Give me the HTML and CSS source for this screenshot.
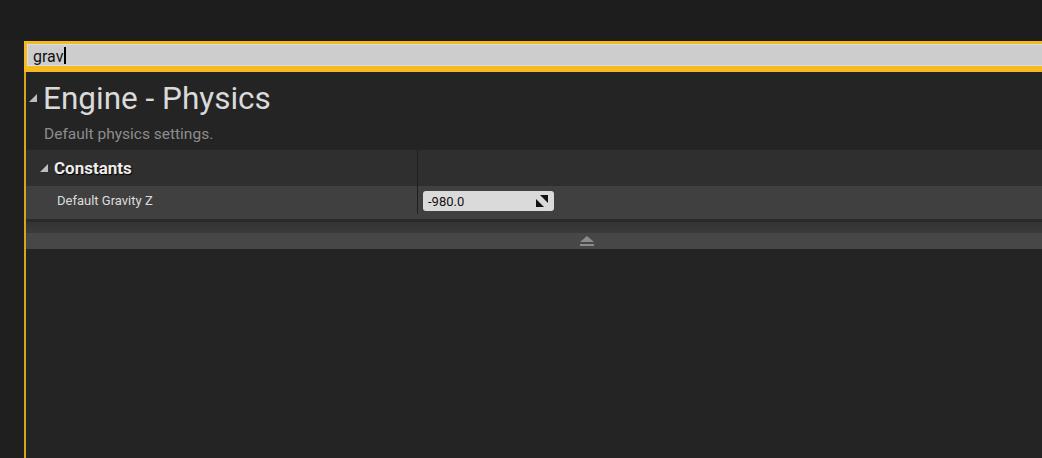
FILE: index.html
```html
<!DOCTYPE html>
<html>
<head>
<meta charset="utf-8">
<link rel="stylesheet" href="styles.css">
</head>
<body>
<div class="top"></div>
<div class="panel">
  <div class="search">
    <div class="input"><span class="typed">grav</span><span class="caret"></span></div>
  </div>
  <div class="body">
    <div class="cat-head">
      <svg class="tri big" width="8" height="8" viewBox="0 0 8 8"><polygon points="0,8 8,0 8,8"/></svg>
      <h1 class="cat-title">Engine - Physics</h1>
    </div>
    <p class="desc">Default physics settings.</p>
    <div class="group">
      <div class="row row-head">
        <div class="name">
          <svg class="tri" width="8" height="8" viewBox="0 0 8 8"><polygon points="0,8 8,0 8,8"/></svg>
          <span class="group-title">Constants</span>
        </div>
        <div class="val"></div>
      </div>
      <div class="row row-prop">
        <div class="name"><span class="prop-label">Default Gravity Z</span></div>
        <div class="val">
          <div class="num">
            <span>-980.0</span>
            <svg class="spin" width="12" height="12" viewBox="0 0 12 12"><polygon points="4,0 12,0 12,8"/><polygon points="0,4 0,12 8,12"/></svg>
          </div>
        </div>
      </div>
    </div>
    <div class="sep"></div>
    <div class="collapse">
      <svg width="14" height="10" viewBox="0 0 14 10"><polygon points="7,0 14,6 0,6" fill="#8c8c8c"/><rect x="0" y="8" width="14" height="2" fill="#8c8c8c"/></svg>
    </div>
  </div>
</div>
</body>
</html>
```

FILE: styles.css
```css
html, body {
  margin: 0;
  padding: 0;
  height: 100%;
}
body {
  background: #1f1f1f;
  font-family: Roboto, "Noto Sans", sans-serif;
  overflow: hidden;
}
.top {
  height: 41px;
  background: #1d1d1d;
}
.panel {
  margin-left: 24px;
  height: 417px;
  display: flex;
  flex-direction: column;
}
.search {
  background: #f6b921;
  padding: 3px 0 6px 3px;
}
.input {
  height: 20px;
  background: #cdcdcd;
  border: 1px solid #dedede;
  border-right: none;
  display: flex;
  align-items: center;
  padding-left: 5px;
  font-size: 16px;
  color: #111;
}
.typed {
  margin-top: 2px;
}
.caret {
  display: inline-block;
  width: 2px;
  height: 17px;
  background: #000;
  margin-left: 1px;
}
.body {
  flex: 1;
  background: #242424;
  border-left: 2px solid #d9a41b;
}
.cat-head {
  display: flex;
  align-items: center;
  height: 50px;
  padding-left: 3px;
}
.tri {
  fill: #bdbdbd;
  flex: none;
}
.tri.big {
  margin-top: 2px;
}
.cat-title {
  margin: 3px 0 0 6px;
  font-weight: 400;
  font-size: 31.5px;
  color: #dadada;
}
.desc {
  margin: 0;
  height: 28px;
  line-height: 24px;
  padding-left: 18px;
  font-size: 15.5px;
  color: #8d8d8d;
}
.row {
  display: flex;
}
.name {
  width: 392px;
  box-sizing: border-box;
  flex: none;
  display: flex;
  align-items: center;
  border-right: 1px solid #1f1f1f;
}
.val {
  flex: 1;
  display: flex;
  align-items: center;
}
.row-head {
  height: 36px;
  background: #2f2f2f;
}
.row-head .name {
  padding-left: 14px;
}
.group-title {
  margin-left: 6px;
  font-weight: 700;
  font-size: 17px;
  color: #ececec;
  text-shadow: 1px 1px 1px #000;
}
.row-prop {
  height: 33px;
  background: #404040;
}
.row-prop .name {
  padding-left: 31px;
  height: 28px;
  align-self: flex-start;
}
.prop-label {
  font-size: 13px;
  color: #dcdcdc;
  margin-top: 1px;
}
.row-prop .val {
  align-items: flex-start;
  padding-top: 5px;
  padding-left: 5px;
}
.num {
  width: 131px;
  height: 20px;
  box-sizing: border-box;
  background: #dadada;
  border-radius: 3px;
  display: flex;
  align-items: center;
  justify-content: space-between;
  padding: 0 6px 0 5px;
  font-size: 13px;
  color: #111;
}
.spin {
  fill: #111;
}
.sep {
  height: 14px;
  background: linear-gradient(#2a2a2a 0 3px, #333 3px, #3b3b3b 14px);
}
.collapse {
  height: 16px;
  background: #474747;
  display: flex;
  justify-content: center;
  align-items: center;
  padding-left: 106px;
}
```
